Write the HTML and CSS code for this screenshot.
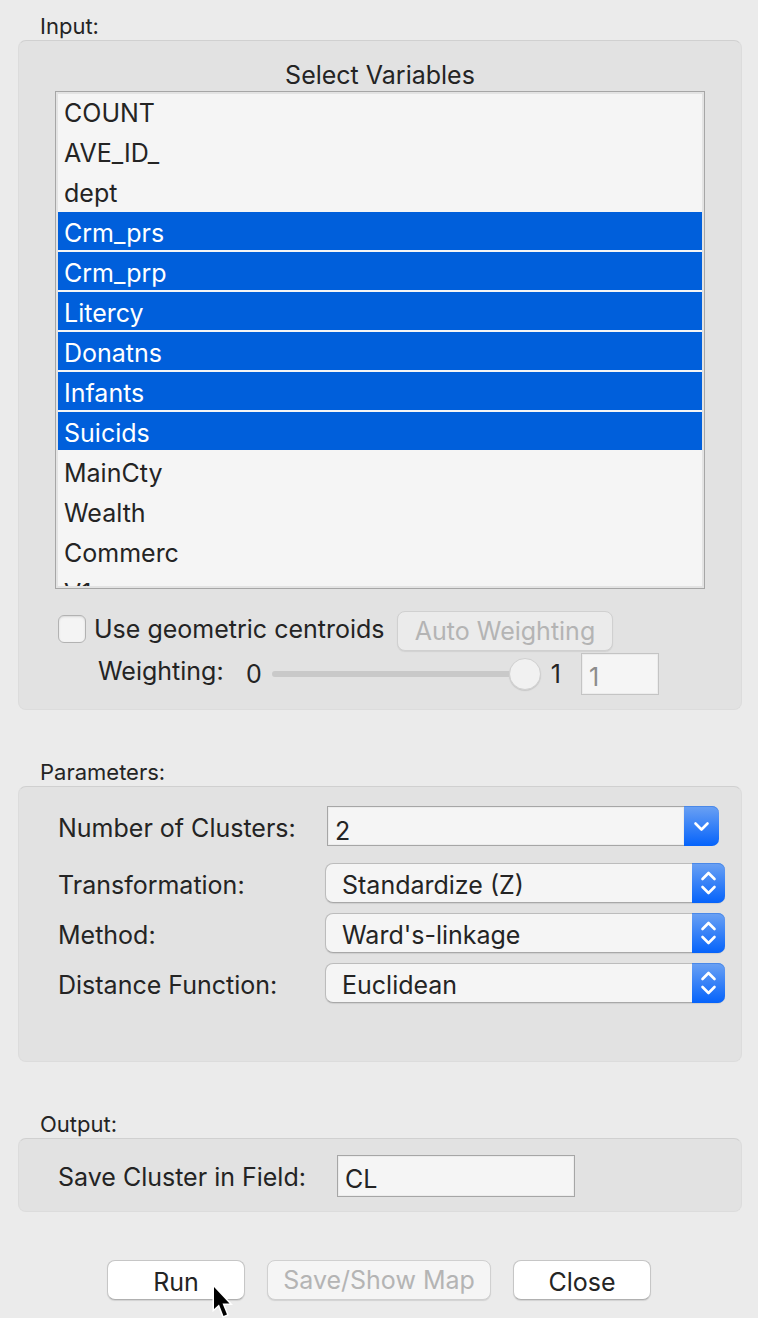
FILE: index.html
```html
<!DOCTYPE html>
<html lang="en">
<head>
<meta charset="utf-8">
<title>Hierarchical Clustering Settings</title>
<link rel="stylesheet" href="styles.css">
</head>
<body>
<form class="dialog">
  <section class="group">
    <h2 class="group-title">Input:</h2>
    <div class="panel panel-input">
      <label class="list-title" for="variables">Select Variables</label>
      <div class="list-frame">
        <select class="list" id="variables" multiple size="12">
          <option>COUNT</option>
          <option>AVE_ID_</option>
          <option>dept</option>
          <option selected>Crm_prs</option>
          <option selected>Crm_prp</option>
          <option selected>Litercy</option>
          <option selected>Donatns</option>
          <option selected>Infants</option>
          <option selected>Suicids</option>
          <option>MainCty</option>
          <option>Wealth</option>
          <option>Commerc</option>
          <option>V1</option>
        </select>
      </div>
      <div class="centroid-row">
        <label class="check-label"><input class="check" type="checkbox">Use geometric centroids</label>
        <button class="button button-auto" type="button" disabled>Auto Weighting</button>
      </div>
      <div class="weight-row">
        <label class="weight-label" for="weight">Weighting:</label>
        <span>0</span>
        <input class="slider" id="weight" type="range" min="0" max="1" step="0.01" value="1" disabled>
        <span>1</span>
        <input class="field field-weight" type="text" value="1" aria-label="Weight value" disabled>
      </div>
    </div>
  </section>

  <section class="group">
    <h2 class="group-title">Parameters:</h2>
    <div class="panel panel-parameters">
      <div class="param-row param-first">
        <label class="label" for="clusters">Number of Clusters:</label>
        <div class="combo">
          <input class="field field-combo" id="clusters" type="text" value="2">
          <button class="combo-button" type="button" aria-label="Show choices">
            <svg width="17" height="11" viewBox="0 0 17 11"><path class="chevron" d="M2.5 2.5l6 6 6-6"/></svg>
          </button>
        </div>
      </div>
      <div class="param-row">
        <label class="label" for="transformation">Transformation:</label>
        <div class="popup">
          <select class="popup-select" id="transformation"><option>Standardize (Z)</option></select>
          <span class="popup-cap"><svg width="17" height="26" viewBox="0 0 17 26"><path class="chevron" d="M2.5 9l6-6 6 6M2.5 17l6 6 6-6"/></svg></span>
        </div>
      </div>
      <div class="param-row">
        <label class="label" for="method">Method:</label>
        <div class="popup">
          <select class="popup-select" id="method"><option>Ward's-linkage</option></select>
          <span class="popup-cap"><svg width="17" height="26" viewBox="0 0 17 26"><path class="chevron" d="M2.5 9l6-6 6 6M2.5 17l6 6 6-6"/></svg></span>
        </div>
      </div>
      <div class="param-row">
        <label class="label" for="distance">Distance Function:</label>
        <div class="popup">
          <select class="popup-select" id="distance"><option>Euclidean</option></select>
          <span class="popup-cap"><svg width="17" height="26" viewBox="0 0 17 26"><path class="chevron" d="M2.5 9l6-6 6 6M2.5 17l6 6 6-6"/></svg></span>
        </div>
      </div>
    </div>
  </section>

  <section class="group">
    <h2 class="group-title">Output:</h2>
    <div class="panel panel-output">
      <label class="label" for="output">Save Cluster in Field:</label>
      <input class="field field-output" id="output" type="text" value="CL">
    </div>
  </section>

  <div class="actions">
    <div class="run">
      <button class="button button-push" type="button">Run</button>
      <svg class="pointer" width="24" height="35" viewBox="0 0 24 35"><path d="M3 4V26L8 21.500L12.500 33L16 31.500L11.500 20.500H18.500Z"/></svg>
    </div>
    <button class="button button-save" type="button" disabled>Save/Show Map</button>
    <button class="button button-push" type="button">Close</button>
  </div>
</form>
</body>
</html>
```
FILE: styles.css
```css
* {
  box-sizing: border-box;
}

body {
  margin: 0;
  background: #ebebeb;
  color: #242424;
  font: 25px/32px Inter, "Liberation Sans", sans-serif;
}

input,
select,
button {
  margin: 0;
  font: inherit;
  color: inherit;
  outline: none;
}

.dialog {
  padding: 12px 16px 18px 18px;
}

.group {
  margin-bottom: 48px;
}

.group-title {
  margin: 0 0 0 22px;
  font-size: 22px;
  font-weight: 400;
  line-height: 28px;
}

.panel {
  border: 1px solid #dcdcdc;
  border-top-color: #d0d0d0;
  border-radius: 8px;
  background: #e2e2e2;
}

/* Input */
.panel-input {
  padding: 18px 36px 14px;
}

.list-title {
  display: block;
  text-align: center;
}

.list-frame {
  padding: 0 2px 2px;
  border: 1px solid #a6a6a6;
  background: #e3e3e3;
}

.list {
  display: block;
  width: 100%;
  height: 494px;
  padding: 0;
  border: 0;
  border-top: 2px solid #e3e3e3;
  border-radius: 0;
  background: #f5f5f5;
  overflow-y: auto;
  scrollbar-width: none;
}

.list option {
  display: block;
  min-height: 0;
  padding: 6px 0 4px 6px;
}

.list option:first-child {
  padding-top: 4px;
}

.list option:checked {
  background-image: linear-gradient(#005fdb 38px, #f5f5f5 38px);
  -webkit-text-fill-color: #fff;
}

.centroid-row {
  display: flex;
  align-items: flex-start;
  gap: 6px;
  margin-top: 22px;
  padding-left: 3px;
}

.check-label {
  display: flex;
  align-items: center;
  gap: 8px;
  min-width: 333px;
  height: 36px;
  white-space: nowrap;
}

.check {
  appearance: none;
  width: 28px;
  height: 28px;
  border: 1px solid #b2b2b2;
  border-radius: 6px;
  background: #f4f4f4;
  box-shadow: inset 0 1px 2px #d8d8d8;
}

.weight-row {
  display: flex;
  align-items: center;
  gap: 10px;
  margin: 2px 46px 0 43px;
}

.weight-label {
  align-self: flex-start;
  width: 138px;
  line-height: 36px;
}

.slider {
  appearance: none;
  flex: 1;
  min-width: 0;
  height: 32px;
  background: transparent;
}

.slider::-webkit-slider-runnable-track {
  height: 6px;
  border-radius: 3px;
  background: #c9c9c9;
}

.slider::-webkit-slider-thumb {
  appearance: none;
  width: 32px;
  height: 32px;
  margin-top: -13px;
  border: 1px solid #d0d0d0;
  border-radius: 50%;
  background: #f1f1f1;
  box-shadow: 0 1px 1px #c8c8c8;
}

.field {
  height: 42px;
  padding: 6px 7px 0;
  border: 1px solid #a6a6a6;
  border-radius: 0;
  background: #f5f5f5;
  box-shadow: inset 0 0 0 1px #ececec;
}

.field-weight {
  width: 78px;
  margin-left: 10px;
  border-color: #c4c4c4;
  color: #8c8c8c;
}

/* Parameters */
.panel-parameters {
  display: flex;
  flex-direction: column;
  gap: 10px;
  padding: 19px 16px 58px 39px;
}

.param-row {
  display: grid;
  grid-template-columns: 267px minmax(0, 1fr);
}

.param-first {
  margin-bottom: 7px;
}

.label {
  padding-top: 6px;
  white-space: nowrap;
}

.combo {
  display: flex;
  margin: 0 6px 0 2px;
}

.field-combo {
  flex: 1;
  min-width: 0;
  height: 40px;
  padding-top: 9px;
  border-right: 0;
}

.combo-button,
.popup-cap {
  display: flex;
  align-items: center;
  justify-content: center;
  padding: 0;
  border: 0;
  border-radius: 0 7px 7px 0;
  background: linear-gradient(#6ba1f3, #0563fb);
  box-shadow: inset 0 1px #4a88e8;
}

.combo-button {
  width: 35px;
}

.chevron {
  fill: none;
  stroke: #fff;
  stroke-width: 2.6;
  stroke-linecap: round;
  stroke-linejoin: round;
}

.popup {
  position: relative;
}

.popup-select {
  appearance: none;
  display: block;
  width: 100%;
  height: 40px;
  padding: 4px 40px 0 16px;
  border: 1px solid #bcbcbc;
  border-bottom-color: #a8a8a8;
  border-radius: 8px;
  background: #f5f5f5;
  box-shadow: 0 1px 1px #cfcfcf;
}

.popup-cap {
  position: absolute;
  top: 0;
  right: 0;
  bottom: 0;
  width: 33px;
  pointer-events: none;
}

/* Output */
.panel-output {
  display: flex;
  align-items: flex-start;
  gap: 31px;
  padding: 16px 39px 14px;
}

.field-output {
  width: 238px;
}

/* Buttons */
.button {
  height: 40px;
  padding: 4px 0 0;
  border: 1px solid #c6c6c6;
  border-bottom-color: #b0b0b0;
  border-radius: 8px;
  background: #fff;
  box-shadow: 0 1px 1px #d2d2d2;
  line-height: 32px;
  white-space: nowrap;
}

.button:disabled {
  border-color: #d0d0d0;
  color: #b4b4b4;
}

.button-auto {
  width: 216px;
  padding-top: 0;
  background: #ebebeb;
}

.button-push {
  width: 138px;
}

.button-save {
  width: 224px;
  padding-top: 0;
  background: #f5f5f5;
}

.actions {
  display: flex;
  justify-content: center;
  gap: 22px;
  padding-right: 2px;
}

.run {
  position: relative;
}

.pointer {
  position: absolute;
  top: 23px;
  left: 104px;
  pointer-events: none;
}

.pointer path {
  fill: #000;
  stroke: #fff;
  stroke-width: 3;
  paint-order: stroke;
}
```
